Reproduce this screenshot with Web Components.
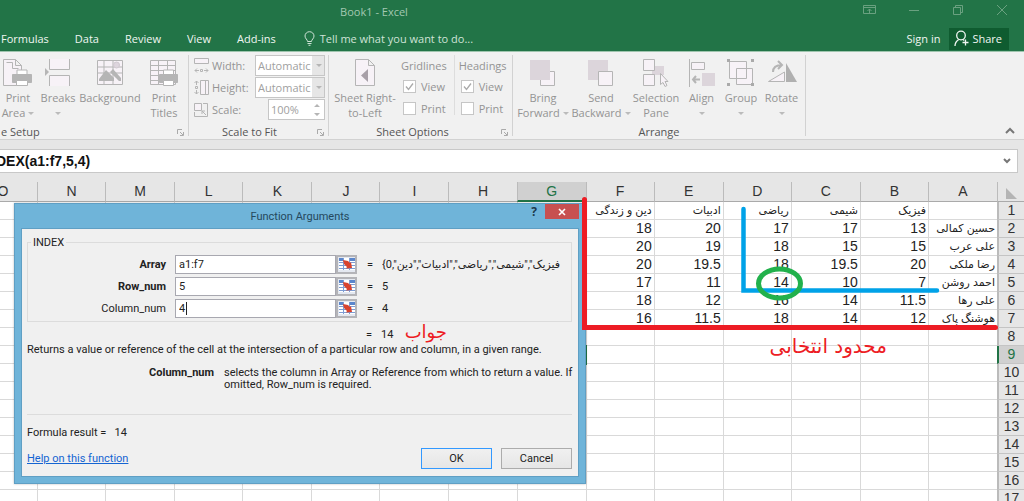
<!DOCTYPE html>
<html lang="en">
<head>
<meta charset="utf-8">
<title>Book1 - Excel</title>
<style>
html,body{margin:0;height:100%;overflow:hidden}
body{font:11px/15px "Open Sans","DejaVu Sans",sans-serif;background:#e6e6e6;color:#444}
</style>
</head>
<body>
<excel-app></excel-app>
<script>
const define = (name, html, setup) => customElements.define(name, class extends HTMLElement {
  constructor() {
    super();
    const t = document.createElement('template');
    t.innerHTML = html;
    this.attachShadow({mode: 'open'}).append(t.content.cloneNode(true));
    if (setup) setup(this, this.shadowRoot);
  }
});

/* Green window header: title, window controls and ribbon tabs */
define('excel-header', `
<style>
:host{display:block;background:#227447;color:#f0f6f2;border-bottom:1px solid #9fc5ae}
button{font:inherit;color:inherit;background:none;border:0;padding:0;margin:0;white-space:nowrap}
.title{display:grid;grid-template-columns:748px 1fr;height:26px;color:#a3c8b2}
.title h1{font:inherit;margin:0;padding-top:4px;text-align:center}
.win{display:flex;justify-content:flex-end;gap:30px;padding:3px 15px 0 0;align-items:start;color:#6aa180}
.win svg{display:block;width:14px;height:14px}
.bar{display:flex;align-items:center;height:25px;padding:0 15px 0 1px}
nav{display:flex;gap:26px;flex:1}
.tell{display:flex;align-items:center;gap:5px;color:#cfe3d7;padding-left:2px}
.share{display:flex;align-items:center;gap:3px;background:#0f5c30;height:22px;padding:0 7px 0 5px;margin-left:9px}
</style>
<div class="title"><h1>Book1 - Excel</h1>
<div class="win">
<button aria-label="Ribbon display options"><svg fill="none" stroke="currentColor"><path d="M.5 2.500h12v8H.5zM.5 4.500h12M6.500 10V6M4.500 8l2-2 2 2"/></svg></button>
<button aria-label="Minimize"><svg fill="none" stroke="currentColor"><path d="M2 7.500h10"/></svg></button>
<button aria-label="Restore"><svg fill="none" stroke="currentColor"><path d="M2.500 4.500h7v7h-7zM4.500 4V2.500h7v7H10"/></svg></button>
<button aria-label="Close"><svg fill="none" stroke="currentColor"><path d="M2 2l10 10M12 2L2 12"/></svg></button>
</div></div>
<div class="bar"><nav>
<button>Formulas</button><button>Data</button><button>Review</button><button>View</button><button>Add-ins</button>
<button class="tell"><svg width="11" height="15" fill="none" stroke="currentColor"><path d="M3.500 10.500c0-2-2.500-2.800-2.500-5.500a4.500 4.300 0 0 1 9 0c0 2.700-2.500 3.500-2.500 5.500zM3.500 12.500h4M4.500 14.300h2"/></svg>Tell me what you want to do...</button>
</nav><button>Sign in</button>
<button class="share"><svg width="15" height="17" fill="none" stroke="currentColor" stroke-width="1.300"><circle cx="7" cy="5.500" r="4.300"/><path d="M1 16c0-3 1.500-5 3.700-6.500M9 9.500l1.200 1M11.500 9.500v6M8.500 12.500h6"/></svg>Share</button></div>`);

/* A titled section of the ribbon */
define('ribbon-group', `
<style>
:host{display:flex;flex-direction:column;position:relative;border-right:1px solid #d2d2d2;box-sizing:border-box;height:81px}
.body{display:flex;flex:none;height:69px;padding:0 5px 0 0}
:host([flush]) .body{padding:0}
:host([flush]) .cap{text-align:left;padding-left:1px}
.cap{line-height:15px;text-align:center;color:#555;padding-right:var(--cap-shift,0);white-space:nowrap}
svg{position:absolute;right:4px;bottom:0}
:host([plain]) svg{display:none}
</style>
<div class="body"><slot></slot></div><div class="cap"></div>
<svg width="7" height="7" fill="none" stroke="#aaa"><path d="M.5 5V.5H5M3 3l3 3M6.500 3v3.500H3"/></svg>`,
(el, root) => { root.querySelector('.cap').textContent = el.getAttribute('caption'); });

/* Large ribbon button: icon above one or two lines of label */
define('ribbon-button', `
<style>
:host{display:block;flex:none}
button{font:inherit;color:#949494;background:none;border:0;margin:0;padding:4px 0 0;width:100%;display:flex;flex-direction:column;align-items:center}
slot{display:block;height:28px;margin-bottom:3px}
span{display:block;height:15px;white-space:nowrap}
.arr::after{content:"";display:inline-block;border:3px solid transparent;border-top-color:#bbb;border-bottom:0;margin-left:3px;vertical-align:2px}
.arr:empty::after{margin-left:0}
</style>
<button disabled><slot></slot><span class="one"></span><span class="two"></span></button>`,
(el, root) => {
  root.querySelector('.one').textContent = el.getAttribute('one');
  const two = root.querySelector('.two');
  two.textContent = el.getAttribute('two') || '';
  two.classList.toggle('arr', el.hasAttribute('menu'));
});

define('excel-ribbon', `
<style>
:host{display:block;background:#f1f1f1;border-bottom:1px solid #d2d2d2;padding:3px 0;position:relative;color:#949494}
.row{display:flex}
svg{display:block;fill:none;stroke:#b5b5b5}
.scale{display:grid;grid-template-columns:16px 41px 70px;row-gap:1px;column-gap:2px;padding:0 0 0 5px;align-content:start;align-items:center}
select,.spin{box-sizing:border-box;height:21px;border:1px solid #c6c6c6;background:#fff linear-gradient(#e6e6e6,#e6e6e6) right/12px 100% no-repeat;color:#a0a0a0;font:inherit;width:70px;margin:0;padding:0 0 0 2px;appearance:none;opacity:1;border-radius:0}
.sel{position:relative}
.sel svg{position:absolute;right:3px;top:9px;fill:#b5b5b5;stroke:none}
.spin{width:57px;margin-left:13px;background:#fff;display:flex;align-items:center;justify-content:space-between;padding-right:4px}
.spin input{width:36px;min-width:0;border:0;padding:0;background:none;font:inherit;color:inherit}
.spin svg{fill:#b5b5b5;stroke:none}
.checks{display:grid;grid-template-rows:20px 22px 22px;align-items:center;align-content:start}
.checks label{display:flex;align-items:center;gap:5px;padding-left:2px}
input[type=checkbox]{appearance:none;box-sizing:border-box;width:13px;height:13px;margin:0;border:1px solid #c6c6c6;background:#fff}
input[type=checkbox]:checked{background-image:url("data:image/svg+xml,%3Csvg xmlns='http://www.w3.org/2000/svg' width='11' height='11'%3E%3Cpath d='M2 5.500l2.500 3 4.500-6' fill='none' stroke='%23aaa' stroke-width='1.300'/%3E%3C/svg%3E")}
.head{border-left:1px solid #ddd;padding-left:4px;margin-left:7px;height:60px}
.up{position:absolute;right:9px;bottom:4px;border:0;background:none;padding:0}
.up svg{stroke:#777;stroke-width:2}
</style>
<div class="row">
<ribbon-group caption="e Setup" flush style="width:189px">
 <ribbon-button one="Print" two="Area" menu style="width:36px"><svg width="30" height="28"><path fill="#f7f2f7" d="M.5.500h12l6 6v20H.5zM12.500.500v6h6"/><path fill="none" d="M3.500 3.500h6v6h6"/><path d="M14 16h10v-5H14z" fill="#fff"/><path fill="#b5b5b5" d="M9.500 15.500h19v8h-19z"/><path fill="#fff" d="M13.500 21.500h11v5h-11z"/></svg></ribbon-button>
 <ribbon-button one="Breaks" menu style="width:44px"><svg width="28" height="28"><path fill="#f7f2f7" d="M5.500 0v10.500h20V0M5.500 27V16.500h20V27"/><path fill="#b5b5b5" stroke="none" d="M1 9l4 4-4 4z"/></svg></ribbon-button>
 <ribbon-button one="Background" style="width:60px"><svg width="28" height="28"><path fill="#f7f2f7" d="M1.500 1.500h25v24h-25zM1.500 8h25M1.500 14h25M8 1.500v24M17 1.500v24"/><circle cx="20.500" cy="6" r="3" fill="#ddd5dd" stroke="#d0c8d0"/><path fill="#b5b5b5" stroke="none" d="M3 20l7-9 8 8v3H3zM14 13l3-3 8 9v3h-2z"/></svg></ribbon-button>
 <ribbon-button one="Print" two="Titles" style="width:48px"><svg width="30" height="28"><path fill="#f7f2f7" d="M1.500 1.500h25v24h-25z"/><path d="M1.500 6.500h25M1.500 11.500h25M1.500 16.500h25M1.500 21.500h25M9.500 1.500v24M18.500 1.500v24"/><path d="M14.500 16v-5h10v5" fill="#fff"/><path fill="#b5b5b5" d="M10.500 15.500h18v8h-18z"/><path fill="#fff" d="M14.500 21.500h10v5h-10z"/></svg></ribbon-button>
</ribbon-group>
<ribbon-group caption="Scale to Fit" style="width:140px;--cap-shift:18px;">
 <div class="scale">
 <svg width="16" height="16"><path fill="#f7f2f7" d="M.5.500h14v5H.5z"/><path d="M1 12.500h4M10 12.500h4M6.500 11.500h2v2h-2zM3 10.500l-2 2 2 2M12 10.500l2 2-2 2"/></svg><label for="w">Width:</label><span class="sel"><select id="w" disabled><option>Automatic</option></select><svg width="6" height="4"><path d="M0 0h6L3 3z"/></svg></span>
 <svg width="16" height="16"><path fill="#f7f2f7" d="M6.500.500h8v14h-8z"/><path d="M2.500 1v4M2.500 10v4M1.500 6.500h2v2h-2zM.5 3l2-2 2 2M.5 12l2 2 2-2M11.500 1v13"/></svg><label for="h">Height:</label><span class="sel"><select id="h" disabled><option>Automatic</option></select><svg width="6" height="4"><path d="M0 0h6L3 3z"/></svg></span>
 <svg width="16" height="16"><path fill="#f7f2f7" d="M.5 1.500h7v7h-7z"/><path fill="none" d="M9 1.500h4.500v13H.5V10M12 13L8 9M8 12V9h3"/></svg><label for="s">Scale:</label><span class="spin"><input id="s" value="100%" disabled><svg width="6" height="14"><path d="M0 4h6L3 1zM0 10h6l-3 3z"/></svg></span>
 </div>
</ribbon-group>
<ribbon-group caption="Sheet Options" style="width:184px;--cap-shift:16px">
 <ribbon-button one="Sheet Right-" two="to-Left" style="width:72px"><svg width="22" height="28"><path fill="#f7f2f7" d="M1.500.500h13l6 6v20h-19zM14.500.500v6h6"/><path fill="#a8a0a8" stroke="none" d="M14 10v13l-7-6.500z"/></svg></ribbon-button>
 <div class="checks"><span>Gridlines</span><label><input type="checkbox" checked disabled>View</label><label><input type="checkbox" disabled>Print</label></div>
 <div class="checks head"><span>Headings</span><label><input type="checkbox" checked disabled>View</label><label><input type="checkbox" disabled>Print</label></div>
</ribbon-group>
<ribbon-group caption="Arrange" plain style="width:293px">
 <ribbon-button one="Bring" two="Forward" menu style="width:60px"><svg width="28" height="28"><path fill="#f7f2f7" d="M11.500 12.500h14v14h-14z"/><path stroke="none" fill="#dcd5db" d="M1 1h20v20H1z"/></svg></ribbon-button>
 <ribbon-button one="Send" two="Backward" menu style="width:56px"><svg width="28" height="28"><path stroke="none" fill="#dcd5db" d="M1 1h20v20H1z"/><path fill="#f7f2f7" d="M11.500 12.500h14v14h-14z"/></svg></ribbon-button>
 <ribbon-button one="Selection" two="Pane" style="width:54px"><svg width="28" height="28"><path stroke="none" fill="#dcd5db" d="M10 7h12v9H10z"/><path fill="#f7f2f7" d="M1.500.500h11v11h-11zM1.500 15.500h11v11h-11z"/><path fill="#f7f2f7" d="M18.500 14.500v11l2.500-2 2 4 2-1-2-4h3z"/></svg></ribbon-button>
 <ribbon-button one="Align" menu style="width:37px"><svg width="28" height="28"><path d="M1.500 0v28" /><path fill="#f7f2f7" d="M3.500 3.500h13v7h-13z"/><path stroke="none" fill="#dcd5db" d="M14 14h13v13H14z"/><path d="M12 20.500H5M8 17l-3 3.500L8 24" stroke-width="2"/></svg></ribbon-button>
 <ribbon-button one="Group" menu style="width:42px"><svg width="28" height="28"><path fill="#f7f2f7" d="M2.500 2.500h17v17h-17z"/><path fill="#f7f2f7" d="M9.500 9.500h16v16h-16z"/><path d="M9.500 19.500h10v-10"/><path stroke="none" fill="#aaa" d="M0 0h3v3H0zM24 0h3v3h-3zM0 24h3v3H0zM24 24h3v3h-3z"/></svg></ribbon-button>
 <ribbon-button one="Rotate" menu style="width:39px"><svg width="30" height="28"><path fill="#f7f2f7" d="M1.500 22.500L17.500 13v9.500z"/><path stroke="none" fill="#b0b0b0" d="M19 4v19h11z"/><path d="M6 13c0-5 3-7 9-7M11 2l4 4-4 4" stroke-width="2"/></svg></ribbon-button>
</ribbon-group>
</div>
<button class="up" aria-label="Collapse the ribbon"><svg width="10" height="8"><path d="M1 6l4-4 4 4"/></svg></button>`);

define('formula-bar', `
<style>
:host{display:flex;margin:9px 6px 9px 0;border:1px solid #c8c8c8;border-left:0;background:#fff;height:22px;align-items:center}
input{flex:1;min-width:0;border:0;padding:0;background:none;font:bold 14px "Liberation Sans",sans-serif;color:#111;text-indent:-4px}
button{border:0;background:none;padding:0;width:14px}
svg{display:block}
</style>
<input aria-label="Formula" value="DEX(a1:f7,5,4)"><button aria-label="Expand formula bar"><svg width="8" height="6" fill="none" stroke="#777" stroke-width="2"><path d="M1 1l3 3 3-3"/></svg></button>`);

/* Right-to-left worksheet */
define('sheet-grid', `
<style>
:host{display:block;overflow:hidden;direction:rtl}
table{border-collapse:separate;border-spacing:0;table-layout:fixed;width:1056px;background:#fff;font:14px/17px "Liberation Sans","DejaVu Sans",sans-serif;color:#222}
col{width:69px} col:nth-child(odd){width:68px} col:first-child{width:27px}
th,td{box-sizing:border-box;padding:0 2px 0 0;height:18px;white-space:nowrap;overflow:hidden}
th{font-weight:400;background:#e6e6e6;color:#333;padding:0;text-align:center}
thead th{height:20px;border-bottom:1px solid #aaa;border-left:1px solid #bbb}
tbody th{border-bottom:1px solid #c4c4c4;border-left:2px solid #bbb}
td{border-bottom:1px solid #d9d9d9;border-left:1px solid #d9d9d9;text-align:right;direction:ltr}
td.fa{direction:rtl;font-size:11px}
thead .on{background:#d0d0d0;color:#217346;border-bottom:2px solid #217346}
tbody th.on{background:#d0d0d0;color:#217346;border-left-color:#217346}
td.on{outline:2px solid #217346;outline-offset:-1px}
thead th:first-child svg{display:block;margin:3px auto 0}
</style>
<table><colgroup></colgroup><thead></thead><tbody></tbody></table>`,
(el, root) => {
  const cols = 'ABCDEFGHIJKLMNO'.split('');
  const data = [
    ['', 'فیزیک', 'شیمی', 'ریاضی', 'ادبیات', 'دین و زندگی'],
    ['حسین کمالی', '13', '17', '17', '20', '18'],
    ['علی عرب', '15', '15', '18', '19', '20'],
    ['رضا ملکی', '20', '19.5', '18', '19.5', '20'],
    ['احمد روشن', '7', '10', '14', '11', '17'],
    ['علی رها', '11.5', '14', '16', '12', '18'],
    ['هوشنگ پاک', '12', '14', '18', '11.5', '16']];
  root.querySelector('colgroup').innerHTML = '<col>' + cols.map(() => '<col>').join('');
  root.querySelector('thead').innerHTML = '<tr><th aria-label="Select all"><svg width="11" height="11"><path d="M0 0v11h11z" fill="#b4b4b4"/></svg></th>' +
    cols.map(c => `<th scope="col"${c === 'G' ? ' class="on"' : ''}>${c}</th>`).join('') + '</tr>';
  let rows = '';
  for (let r = 1; r < 18; r++) {
    rows += `<tr><th scope="row"${r === 9 ? ' class="on"' : ''}>${r}</th>` + cols.map((c, i) => {
      const v = (data[r - 1] || [])[i] || '';
      const k = r === 9 && c === 'G' ? 'on' : /[\u0600-\u06ff]/.test(v) ? 'fa' : '';
      return `<td${k ? ` class="${k}"` : ''}>${v}</td>`;
    }).join('') + '</tr>';
  }
  root.querySelector('tbody').innerHTML = rows;
});

/* One argument line: label, reference box, picker button and evaluated value */
define('arg-row', `
<style>
:host{display:grid;grid-template-columns:138px 9px 161px 21px 10px 15px 183px;align-items:center;height:20px}
label{text-align:right}
:host([required]) label{font-weight:700}
input{grid-column:3;box-sizing:border-box;height:19px;width:100%;border:1px solid #a8a8b0;padding:0 3px;font:inherit;color:#222;background:#fff;margin:0}
:host([active]) input{background:#fff linear-gradient(#222,#222) 10px 2px/1px 13px no-repeat}
.pick{box-sizing:border-box;width:21px;height:19px;margin:0;border:2px solid #b4b4b8;padding:0;background:#e4e8f0}
.pick svg{display:block;margin:auto}
.eq{grid-column:6}
output{white-space:nowrap;overflow:hidden;direction:ltr}
</style>
<label for="v"></label><input id="v"><button class="pick" aria-label="Collapse dialog"><svg width="16" height="14"><path fill="#fff" d="M0 1h16v12H0z"/><path fill="#5b86cc" d="M0 1h5v3H0zM11 1h5v3h-5z"/><path d="M0 5.500h16M0 8.500h16M0 11.500h16M4.500 1v12M10.500 1v12" stroke="#7d9dd4" fill="none"/><path fill="#d8432f" d="M4 3l5 1 2 2 1-1 1 6-6 .5 1-1.500-3-3z"/></svg></button><span class="eq">=</span><output for="v"></output>`,
(el, root) => {
  root.querySelector('label').textContent = el.getAttribute('label');
  root.querySelector('input').setAttribute('value', el.getAttribute('value'));
  root.querySelector('output').textContent = el.getAttribute('result');
});

define('function-dialog', `
<style>
:host{display:block;box-sizing:border-box;background:#6fb4d9;border:1px solid #5f9fc4;padding:0 6px 6px;color:#222;box-shadow:0 0 2px #0004;font-family:Roboto,"DejaVu Sans",sans-serif;line-height:15px}
header{display:grid;height:24px;align-items:center;text-align:center;position:relative;color:#25485c}
h2{font:inherit;margin:0}
.ctl{position:absolute;right:0;top:0;display:flex;gap:6px}
.ctl button{border:0;background:none;padding:0;margin:0;width:10px;height:15px;font:bold 12px/15px "Open Sans",sans-serif;color:#1d3a4c}
.ctl .x{width:34px;background:#c75050}
.x svg{display:block;margin:auto}
.body{background:#f0f0f0;border:1px solid #5f9fc4;padding:6px 6px 7px 5px}
fieldset{margin:0;border:1px solid #dcdcdc;padding:4px 0 3px;display:flex;flex-direction:column;gap:2px;min-width:0}
legend{margin:0 0 0 3px;padding:0 2px;line-height:15px}
.res{display:flex;gap:9px;padding:5px 0 0 339px}
p{margin:0}
.desc{display:grid;grid-template-columns:187px 1fr;column-gap:10px;line-height:12px;margin:10px -6px 0 0;height:47px}
.desc b{text-align:right}
hr{border:0;border-top:1px solid #dcdcdc;margin:0 0 10px}
.foot{display:flex;gap:9px;align-items:center;margin-top:8px}
a{flex:1;color:#1464d2}
.foot button{box-sizing:border-box;width:71px;height:21px;border:1px solid #acacac;background:linear-gradient(#f0f0f0,#e6e6e6);font:inherit;color:inherit;padding:0}
.foot .ok{border-color:#3399ff}
</style>
<header><h2>Function Arguments</h2><div class="ctl"><button aria-label="Help">?</button><button class="x" aria-label="Close"><svg width="8" height="8" stroke="#fff" stroke-width="1.600"><path d="M1 1l6 6M7 1L1 7"/></svg></button></div></header>
<div class="body">
<fieldset><legend>INDEX</legend>
<arg-row required label="Array" value="a1:f7" result='{0,"فیزیک","شیمی","ریاضی","ادبیات","دین'></arg-row>
<arg-row required label="Row_num" value="5" result="5"></arg-row>
<arg-row active label="Column_num" value="4" result="4"></arg-row>
</fieldset>
<div class="res"><span>=</span><span>14</span></div>
<p>Returns a value or reference of the cell at the intersection of a particular row and column, in a given range.</p>
<div class="desc"><b>Column_num</b><span>selects the column in Array or Reference from which to return a value. If omitted, Row_num is required.</span></div>
<hr>
<p>Formula result =&nbsp;&nbsp; 14</p>
<div class="foot"><a href="#help">Help on this function</a><button class="ok">OK</button><button>Cancel</button></div>
</div>`);

/* Pen strokes and handwritten notes laid over the worksheet */
define('sheet-notes', `
<style>
:host{display:block;position:absolute;inset:0;pointer-events:none;color:#ed1c24;font:20px/28px "DejaVu Sans",sans-serif;direction:rtl}
svg,span{position:absolute}
svg{right:0;top:0}
.range{right:137px;top:150px}
.answer{right:577px;top:136px;font-size:18px}
</style>
<svg width="450" height="160" fill="none" stroke-width="5" stroke-linecap="round"><path stroke="#ed1c24" d="M10.500 17.500V145.500H421.500"/><path stroke="#00a2e8" stroke-width="4.500" d="M169.500 27V108.500H363"/><ellipse cx="205.500" cy="101.500" rx="21" ry="14.500" stroke="#22b14c"/></svg>
<span class="range">محدود انتخابی</span><span class="answer">جواب</span>`);

define('excel-app', `
<style>
:host{display:flex;flex-direction:column;height:100vh;overflow:hidden}
excel-header,excel-ribbon,formula-bar{flex:none}
main{flex:1;min-height:0;position:relative;overflow:hidden}
function-dialog{position:absolute;right:438px;top:21px;width:572px}
</style>
<excel-header></excel-header><excel-ribbon></excel-ribbon><formula-bar></formula-bar>
<main><sheet-grid></sheet-grid><function-dialog></function-dialog><sheet-notes></sheet-notes></main>`);
</script>
</body>
</html>
